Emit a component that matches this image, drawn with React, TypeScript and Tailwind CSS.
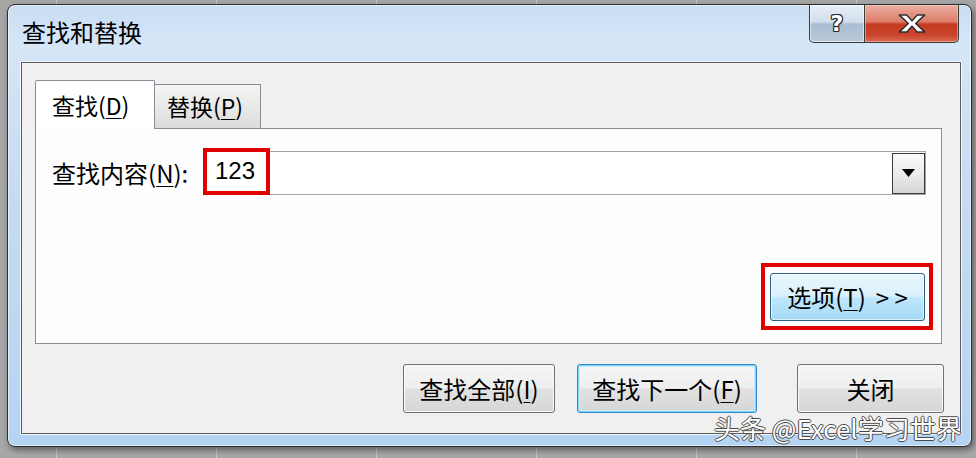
import React from "react";

function U({ c }: { c: string }) {
  return <span className="underline decoration-1 underline-offset-[3px]">{c}</span>;
}

const btnNormal =
  "flex h-[49px] items-center justify-center rounded-[3px] border border-[#707070] bg-[linear-gradient(180deg,#f6f6f6_0%,#eeeeee_48%,#e1e1e1_52%,#d6d6d6_100%)] shadow-[inset_0_0_0_1px_#fbfbfb] text-[24px] leading-[24px] text-black";

export default function App() {
  return (
    <div className="relative h-[458px] w-[976px] overflow-hidden bg-[#a7a7a7] bg-[repeating-linear-gradient(90deg,transparent_0px,transparent_56px,#c4c4c4_56px,#c4c4c4_57px,transparent_57px,transparent_160px)] pl-[7px] pt-[4px] font-['Noto_Sans_CJK_SC',sans-serif] text-black">
      {/* window */}
      <div className="flex h-[443px] w-[965px] flex-col rounded-[8px] border border-[#2e2e2e] bg-[linear-gradient(180deg,#c9ddf2_0%,#d5e6f7_9%,#c6dcf2_40%,#b4d4f3_100%)] shadow-[inset_0_0_0_1px_rgba(255,255,255,0.55),2px_3px_6px_rgba(0,0,0,0.45)]">
        {/* title bar */}
        <div className="flex h-[57px] items-start justify-between">
          <div className="ml-[14px] mt-[15px] text-[24px] leading-[24px] text-black">查找和替换</div>
          <div className="mr-[12px] flex">
            <div className="flex h-[38px] w-[56px] items-center justify-center rounded-bl-[5px] border border-t-0 border-[#3a3a3a] bg-[linear-gradient(180deg,#e6eef7_0%,#d3dfec_45%,#aabdd1_52%,#b9cadb_100%)] shadow-[inset_0_0_0_1px_rgba(255,255,255,0.55)]">
              <span className="font-['DejaVu_Sans',sans-serif] text-[22px] font-bold leading-none text-white [text-shadow:1px_0_#2a2a2a,-1px_0_#2a2a2a,0_1px_#2a2a2a,0_-1px_#2a2a2a,1px_1px_#2a2a2a,-1px_-1px_#2a2a2a,1px_-1px_#2a2a2a,-1px_1px_#2a2a2a]">
                ?
              </span>
            </div>
            <div className="flex h-[38px] w-[94px] items-center justify-center rounded-br-[5px] border border-l-0 border-t-0 border-[#3a3a3a] bg-[linear-gradient(180deg,#eab0a4_0%,#dd7d69_45%,#c63a22_52%,#c9442c_80%,#d86a52_100%)] shadow-[inset_0_0_0_1px_rgba(255,220,210,0.45)]">
              <svg width="30" height="21" viewBox="0 0 28 20">
                <polygon
                  points="2,2 9,2 14,7.5 19,2 26,2 17.5,10 26,18 19,18 14,12.5 9,18 2,18 10.5,10"
                  fill="#ffffff"
                  stroke="#2e2e2e"
                  strokeWidth="1.4"
                  strokeLinejoin="round"
                />
              </svg>
            </div>
          </div>
        </div>

        {/* content */}
        <div className="ml-[13px] mr-[10px] flex h-[372px] flex-col border border-[#5c5c5c] bg-[#f0f0f0] pl-[13px] pr-[18px] pt-[17px] shadow-[0_0_0_1px_rgba(255,255,255,0.75)]">
          {/* tabs */}
          <div className="flex h-[48px] items-end">
            <div className="relative z-10 -mb-px flex h-[49px] w-[120px] items-start rounded-t-[2px] border border-b-0 border-[#898c95] bg-white pl-[16px] pt-[12px] text-[23px] leading-[24px]">
              查找(<U c="D" />)
            </div>
            <div className="flex h-[44px] w-[106px] items-start border border-b-0 border-l-0 border-[#898c95] bg-[linear-gradient(180deg,#f4f4f4_0%,#e9e9e9_50%,#dcdcdc_100%)] pl-[12px] pt-[9px] text-[23px] leading-[24px]">
              替换(<U c="P" />)
            </div>
          </div>

          {/* panel */}
          <div className="flex h-[216px] flex-col border border-[#898c95] bg-[#fdfdfd]">
            <div className="mt-[22px] flex h-[44px] items-center">
              <div className="w-[167px] pl-[16px] text-[24px] leading-[24px]">
                查找内容(<U c="N" />):
              </div>
              <div className="relative mr-[15px] flex h-[44px] flex-1 items-center border border-[#a3a3a3] bg-white">
                <span className="relative top-[-2px] pl-[11px] font-['Liberation_Sans',sans-serif] text-[24px] leading-[24px]">
                  123
                </span>
                <div className="absolute left-[-1px] top-[-4px] h-[47px] w-[67px] border-[4px] border-[#e00000]" />
                <div className="ml-auto flex h-[41px] w-[33px] items-center justify-center border border-[#3a3a3a] bg-[linear-gradient(180deg,#fafafa_0%,#ececec_50%,#d6d6d6_100%)]">
                  <svg width="13" height="8" viewBox="0 0 13 8">
                    <polygon points="0,0 13,0 6.5,8" fill="#000000" />
                  </svg>
                </div>
              </div>
            </div>
            <div className="flex-1" />
            <div className="flex justify-end pb-[13px] pr-[8px]">
              <div className="border-[4px] border-[#e00000] pb-[5px] pl-[5px] pr-[4px] pt-[6px]">
                <div className="flex h-[48px] w-[155px] items-center justify-center rounded-[3px] border border-[#2f5f86] bg-[linear-gradient(180deg,#eaf6fd_0%,#d9f0fc_48%,#bee6fd_52%,#a7d9f5_100%)] shadow-[inset_0_0_0_1px_rgba(255,255,255,0.6)] text-[24px] leading-[24px]">
                  <span>
                    选项(<U c="T" />)
                  </span>
                  <span className="ml-[10px]">&gt; &gt;</span>
                </div>
              </div>
            </div>
          </div>

          {/* bottom buttons */}
          <div className="-mr-[2px] mt-[20px] flex justify-end">
            <div className={`${btnNormal} w-[152px]`}>
              查找全部(<U c="I" />)
            </div>
            <div className="ml-[22px] flex h-[49px] w-[180px] items-center justify-center rounded-[3px] border border-[#2f8ad2] bg-[linear-gradient(180deg,#f6f6f6_0%,#eeeeee_48%,#e1e1e1_52%,#d6d6d6_100%)] shadow-[inset_0_0_0_1px_#7fd3f7,inset_0_0_0_2px_#c9ecfb] text-[24px] leading-[24px]">
              查找下一个(<U c="F" />)
            </div>
            <div className={`ml-[40px] ${btnNormal} w-[147px]`}>关闭</div>
          </div>
        </div>
      </div>

      {/* watermark */}
      <div className="absolute left-[714px] top-[415px] whitespace-nowrap text-[26px] leading-[26px] text-white [text-shadow:1px_0_#4a4a4a,-1px_0_#4a4a4a,0_1px_#4a4a4a,0_-1px_#4a4a4a]">
        头条 @Excel学习世界
      </div>
    </div>
  );
}
